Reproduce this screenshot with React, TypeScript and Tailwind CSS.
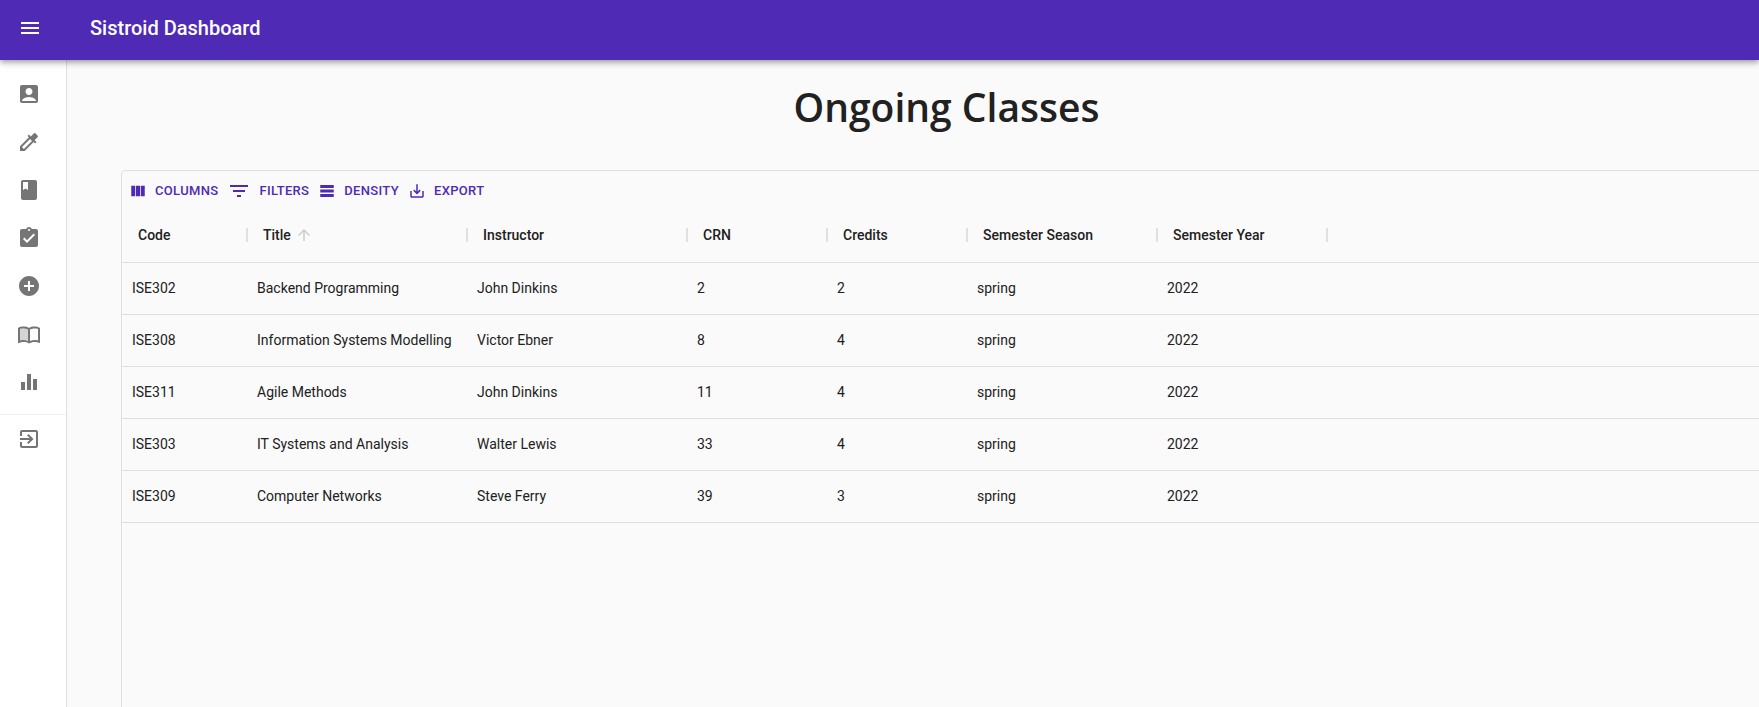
import type { ReactNode } from 'react';
import {
  MdAccountBox,
  MdAddCircle,
  MdArrowUpward,
  MdAssignmentTurnedIn,
  MdBook,
  MdColorize,
  MdEqualizer,
  MdExitToApp,
  MdFilterList,
  MdMenu,
  MdSaveAlt,
} from 'react-icons/md';

function OpenBookIcon() {
  return (
    <svg viewBox="0 0 24 24" width="24" height="24" fill="currentColor" aria-hidden="true">
      <path
        opacity=".3"
        d="M6.5 6.5c-1.2 0-2.4.15-3.5.5v11.5c1.1-.35 2.3-.5 3.5-.5 1.34 0 3.13.41 4.5.99V7.49c-1.37-.58-3.16-.99-4.5-.99z"
      />
      <path d="M21 5c-1.11-.35-2.33-.5-3.5-.5-1.95 0-4.05.4-5.5 1.5-1.45-1.1-3.55-1.5-5.5-1.5S2.45 4.9 1 6v14.65c0 .25.25.5.5.5.1 0 .15-.05.25-.05C3.1 20.45 5.05 20 6.5 20c1.95 0 4.05.4 5.5 1.5 1.35-.85 3.8-1.5 5.5-1.5 1.65 0 3.35.3 4.75 1.05.1.05.15.05.25.05.25 0 .5-.25.5-.5V6c-.6-.45-1.25-.75-2-1zM3 18.5V7c1.1-.35 2.3-.5 3.5-.5 1.34 0 3.13.41 4.5.99v11.5C9.63 18.41 7.84 18 6.5 18c-1.2 0-2.4.15-3.5.5zm18 0c-1.1-.35-2.3-.5-3.5-.5-1.34 0-3.13.41-4.5.99V7.49c1.37-.59 3.16-.99 4.5-.99 1.2 0 2.4.15 3.5.5v11.5z" />
    </svg>
  );
}

function ColumnsIcon() {
  return (
    <svg viewBox="0 0 24 24" width="18" height="18" fill="currentColor" aria-hidden="true">
      <path d="M14.67 5v14H9.33V5h5.34zm1 14H21V5h-5.33v14zm-7.34 0V5H3v14h5.33z" />
    </svg>
  );
}

function RowsIcon() {
  return (
    <svg viewBox="0 0 24 24" width="18" height="18" fill="currentColor" aria-hidden="true">
      <path d="M21 8H3V4h18v4zm0 2H3v4h18v-4zm0 6H3v4h18v-4z" />
    </svg>
  );
}

const navItems: { label: string; icon: ReactNode }[] = [
  { label: 'Profile', icon: <MdAccountBox size={24} /> },
  { label: 'Edit', icon: <MdColorize size={24} /> },
  { label: 'Courses', icon: <MdBook size={24} /> },
  { label: 'Assignments', icon: <MdAssignmentTurnedIn size={24} /> },
  { label: 'Add', icon: <MdAddCircle size={24} /> },
  { label: 'Classes', icon: <OpenBookIcon /> },
  { label: 'Statistics', icon: <MdEqualizer size={24} /> },
];

const tools: { label: string; icon: ReactNode }[] = [
  { label: 'Columns', icon: <ColumnsIcon /> },
  { label: 'Filters', icon: <MdFilterList size={24} /> },
  { label: 'Density', icon: <RowsIcon /> },
  { label: 'Export', icon: <MdSaveAlt size={18} /> },
];

const columns = [
  { label: 'Code', width: 'w-[125px]' },
  { label: 'Title', width: 'w-[220px]', sorted: true },
  { label: 'Instructor', width: 'w-[220px]' },
  { label: 'CRN', width: 'w-[140px]' },
  { label: 'Credits', width: 'w-[140px]' },
  { label: 'Semester Season', width: 'w-[190px]' },
  { label: 'Semester Year', width: 'w-[170px]' },
];

const rows = [
  ['ISE302', 'Backend Programming', 'John Dinkins', '2', '2', 'spring', '2022'],
  ['ISE308', 'Information Systems Modelling', 'Victor Ebner', '8', '4', 'spring', '2022'],
  ['ISE311', 'Agile Methods', 'John Dinkins', '11', '4', 'spring', '2022'],
  ['ISE303', 'IT Systems and Analysis', 'Walter Lewis', '33', '4', 'spring', '2022'],
  ['ISE309', 'Computer Networks', 'Steve Ferry', '39', '3', 'spring', '2022'],
];

function NavLink({ label, icon }: { label: string; icon: ReactNode }) {
  return (
    <a href="#" aria-label={label} className="flex h-12 items-center px-[17px] text-[#757575]">
      {icon}
    </a>
  );
}

function ClassesGrid() {
  return (
    <section className="mx-[54px] min-h-[631px] rounded border border-[#e0e0e0]">
      <div className="flex px-1 pt-1">
        {tools.map((tool) => (
          <button
            key={tool.label}
            type="button"
            className="flex h-8 items-center gap-2 pr-[6px] pl-[3px] text-[13px] font-medium tracking-wide text-[#4f2ab5] uppercase"
          >
            {tool.icon}
            {tool.label}
          </button>
        ))}
      </div>
      <table className="w-full table-fixed border-collapse text-left text-sm">
        <thead>
          <tr className="h-[55px] border-b border-[#e0e0e0]">
            {columns.map((column) => (
              <th key={column.label} scope="col" className={`${column.width} px-0 pt-[2px] pb-0 font-medium`}>
                <div className="-mr-px flex items-center pl-4">
                  {column.label}
                  {column.sorted && <MdArrowUpward size={18} className="ml-1 text-[#cccccc]" />}
                  <span className="ml-auto h-[14px] w-[2px] bg-[#e0e0e0]" />
                </div>
              </th>
            ))}
            <td />
          </tr>
        </thead>
        <tbody>
          {rows.map((row) => (
            <tr key={row[0]} className="h-[52px] border-b border-[#e0e0e0]">
              {row.map((value, index) => (
                <td key={columns[index].label} className="px-[10px] py-0 whitespace-nowrap">
                  {value}
                </td>
              ))}
              <td />
            </tr>
          ))}
        </tbody>
      </table>
    </section>
  );
}

export default function App() {
  return (
    <div className="flex h-screen flex-col overflow-hidden bg-[#fafafa] font-['Roboto',sans-serif] text-[#212121]">
      <header className="z-10 flex h-[60px] shrink-0 items-center bg-[#4f2ab5] pb-1 pl-[18px] text-white shadow-[0_2px_4px_-1px_rgba(0,0,0,0.2),0_4px_5px_0_rgba(0,0,0,0.14),0_1px_10px_0_rgba(0,0,0,0.12)]">
        <button type="button" aria-label="Open menu">
          <MdMenu size={24} />
        </button>
        <span className="ml-12 text-xl font-medium">Sistroid Dashboard</span>
      </header>
      <div className="flex min-h-0 flex-1">
        <nav className="w-[67px] shrink-0 border-r border-[#e0e0e0] bg-white pt-[10px]">
          {navItems.map((item) => (
            <NavLink key={item.label} label={item.label} icon={item.icon} />
          ))}
          <hr className="mt-2 border-[#f2f2f2]" />
          <NavLink label="Log out" icon={<MdExitToApp size={24} />} />
        </nav>
        <main className="w-full shrink-0">
          <h1 className="pt-[23px] pb-[39px] text-center font-['Open_Sans','Noto_Sans',sans-serif] text-[39px] leading-12 font-semibold">
            Ongoing Classes
          </h1>
          <ClassesGrid />
        </main>
      </div>
    </div>
  );
}
